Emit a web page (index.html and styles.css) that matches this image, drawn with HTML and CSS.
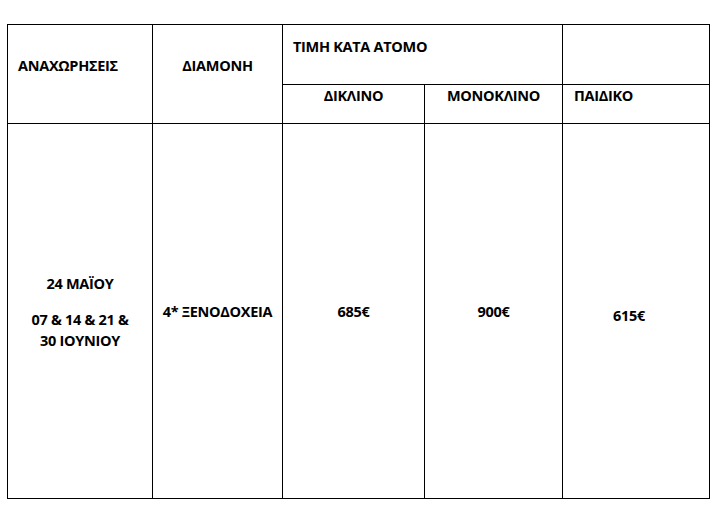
FILE: index.html
```html
<!DOCTYPE html>
<html lang="el">
<head>
<meta charset="utf-8">
<title>Τιμές</title>
<link rel="stylesheet" href="styles.css">
</head>
<body>
<table class="prices">
  <colgroup>
    <col class="c1"><col class="c2"><col class="c3"><col class="c4"><col class="c5">
  </colgroup>
  <tr class="r1">
    <th rowspan="2" class="h-left h-tall">ΑΝΑΧΩΡΗΣΕΙΣ</th>
    <th rowspan="2" class="h-center h-tall">ΔΙΑΜΟΝΗ</th>
    <th colspan="2" class="h-left h-top">ΤΙΜΗ ΚΑΤΑ ΑΤΟΜΟ</th>
    <th class="h-top"></th>
  </tr>
  <tr class="r2">
    <th class="h-center h-sub">ΔΙΚΛΙΝΟ</th>
    <th class="h-center h-sub">ΜΟΝΟΚΛΙΝΟ</th>
    <th class="h-left h-sub h-kid">ΠΑΙΔΙΚΟ</th>
  </tr>
  <tr class="r3">
    <td class="dates">
      <p class="d1">24 ΜΑΪΟΥ</p>
      <p class="d2">07 &amp; 14 &amp; 21 &amp;<br>30 ΙΟΥΝΙΟΥ</p>
    </td>
    <td class="val">4* ΞΕΝΟΔΟΧΕΙΑ</td>
    <td class="val">685€</td>
    <td class="val">900€</td>
    <td class="val kid">615€</td>
  </tr>
</table>
</body>
</html>
```

FILE: styles.css
```css
html, body {
  margin: 0;
  padding: 0;
  background: #ffffff;
}
body {
  font-family: "Open Sans", "Liberation Sans", sans-serif;
  color: #000000;
}
.prices {
  margin: 24px 0 0 7px;
  width: 702px;
  border-collapse: collapse;
  table-layout: fixed;
  font-size: 14.5px;
  font-weight: 700;
  letter-spacing: -0.3px;
}
.c1 { width: 145px; }
.c2 { width: 130px; }
.c3 { width: 142px; }
.c4 { width: 138px; }
.c5 { width: 147px; }
.prices th,
.prices td {
  border: 1px solid #000000;
  padding: 0;
  font-weight: 700;
  line-height: 21px;
}
.r1 { height: 60px; }
.r2 { height: 38px; }
.r3 { height: 375px; }
.h-left {
  text-align: left;
  padding-left: 10px !important;
  vertical-align: middle;
  padding-bottom: 16px !important;
}
.h-center {
  text-align: center;
  vertical-align: middle;
  padding-bottom: 16px !important;
}
.h-tall {
  padding-bottom: 18px !important;
}
.h-sub {
  padding-bottom: 17px !important;
}
.h-kid {
  padding-left: 11px !important;
}
.dates {
  text-align: center;
  vertical-align: middle;
  padding: 2px 6px 0 6px !important;
}
.dates p {
  margin: 0;
}
.d1 {
  margin-bottom: 15px !important;
}
.val {
  text-align: center;
  vertical-align: middle;
}
.kid {
  padding-top: 8px !important;
  padding-right: 14px !important;
}
```
